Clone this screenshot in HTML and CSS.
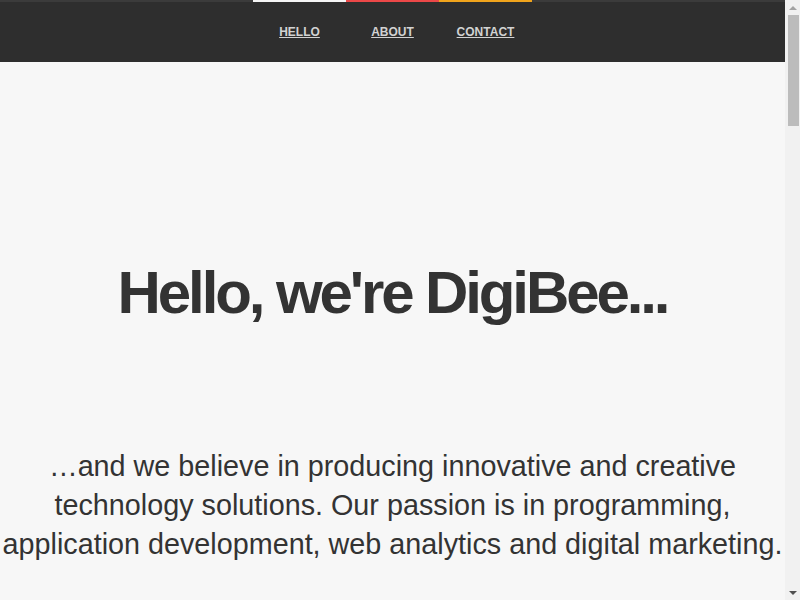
FILE: index.html
```html
<!DOCTYPE html>
<html lang="en">
<head>
<meta charset="utf-8">
<title>DigiBee</title>
<link rel="stylesheet" href="styles.css">
</head>
<body>
<div class="page">
  <nav class="topnav">
    <ul class="menu">
      <li class="item item-hello"><a href="#hello">HELLO</a></li>
      <li class="item item-about"><a href="#about">ABOUT</a></li>
      <li class="item item-contact"><a href="#contact">CONTACT</a></li>
    </ul>
  </nav>
  <main>
    <section class="hero" id="hello">
      <h1 class="title">Hello, we're DigiBee...</h1>
      <p class="lead">…and we believe in producing innovative and creative technology solutions. Our passion is in programming, application development, web analytics and digital marketing.</p>
    </section>
    <section class="more" id="about"></section>
    <section class="more" id="contact"></section>
  </main>
</div>
<div class="scrollbar" aria-hidden="true">
  <span class="arrow arrow-up"></span>
  <div class="track"><span class="thumb"></span></div>
  <span class="arrow arrow-down"></span>
</div>
</body>
</html>
```
FILE: styles.css
```css
html, body {
  margin: 0;
  padding: 0;
}
body {
  background: #f7f7f7;
  color: #333;
  font-family: "Liberation Sans", Arial, sans-serif;
}
.page {
  margin-right: 15px;
}
.topnav {
  background: #2e2e2e;
  height: 62px;
  border-top: 2px solid #3b3b3b;
  box-sizing: border-box;
}
.menu {
  list-style: none;
  margin: -2px 0 0 0;
  padding: 0;
  display: flex;
  justify-content: center;
}
.item {
  width: 93px;
  height: 62px;
  box-sizing: border-box;
  border-top: 2px solid transparent;
  display: flex;
  align-items: center;
  justify-content: center;
}
.item-hello { border-top-color: #f5f5f5; }
.item-about { border-top-color: #ec4848; }
.item-contact { border-top-color: #f0a41c; }
.item a {
  color: #d2d2d2;
  font-size: 12px;
  font-weight: bold;
  text-decoration: underline;
  margin-top: 0;
}
.hero {
  text-align: center;
  padding-top: 196px;
}
.title {
  font-size: 60px;
  font-weight: bold;
  letter-spacing: -3.1px;
  margin: 0 0 120px 0;
  line-height: 69px;
}
.lead {
  font-size: 28.75px;
  line-height: 39px;
  margin: 0;
  padding: 0;
}
.more {
  height: 1000px;
}
.scrollbar {
  position: fixed;
  top: 0;
  right: 0;
  width: 15px;
  height: 100vh;
  background: #f1f1f1;
  display: flex;
  flex-direction: column;
  align-items: center;
}
.arrow {
  height: 15px;
  width: 15px;
  display: flex;
  align-items: center;
  justify-content: center;
}
.arrow::before {
  content: "";
  width: 0;
  height: 0;
  border-left: 4px solid transparent;
  border-right: 4px solid transparent;
}
.arrow-up::before {
  border-bottom: 4px solid #a3a3a3;
}
.arrow-down::before {
  border-top: 4px solid #505050;
}
.track {
  flex: 1;
  width: 100%;
  display: flex;
  justify-content: center;
}
.thumb {
  width: 11px;
  height: 111px;
  background: #bcbcbc;
  margin-left: 1px;
}
```
